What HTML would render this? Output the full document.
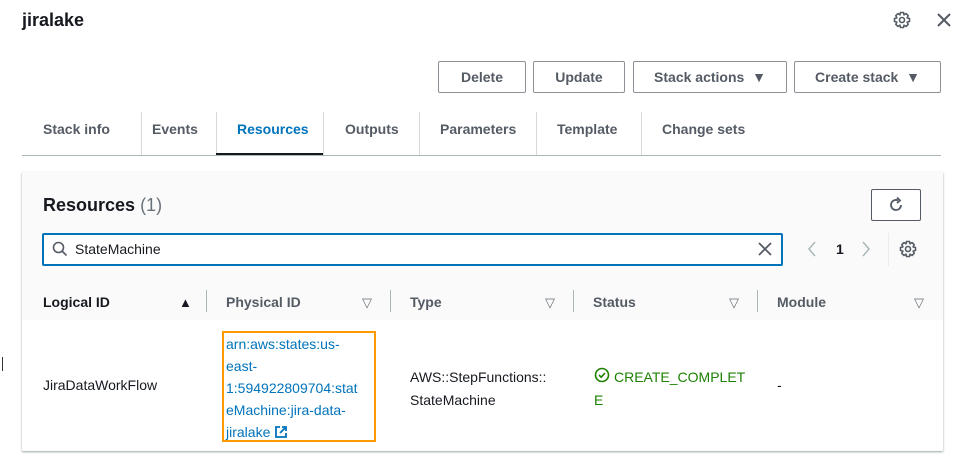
<!DOCTYPE html>
<html><head><style>
*{box-sizing:border-box;margin:0;padding:0}
body{width:977px;height:470px;background:#fff;font-family:"Liberation Sans",sans-serif;color:#16191f;position:relative;overflow:hidden;font-size:14px}
.a{position:absolute}
.btn{position:absolute;top:61px;height:32px;border:1px solid #8d9096;border-radius:2px;font-weight:bold;font-size:14px;color:#545b64;display:flex;align-items:center;justify-content:center;background:#fff}
.tab{position:absolute;top:121px;font-weight:bold;font-size:14px;color:#545b64}
.sep{position:absolute;top:112px;height:44px;width:1px;background:#d5dbdb}
.th{position:absolute;top:294px;font-weight:bold;font-size:14px;color:#545b64}
.tri{position:absolute;top:295px;font-size:13px;color:#687078}
.cs{position:absolute;top:290px;height:22px;width:1px;background:#aab7b8}
.link{color:#0073bb}
</style></head><body>
<div class="a" style="left:22px;top:10px;font-size:18px;font-weight:bold">jiralake</div>
<svg class="a" style="left:893px;top:11px" width="18" height="18" viewBox="0 0 18 18"><path d="M7.5 1.5H10.5L11 3.8L13.1 2.6L15.2 4.7L14.1 6.9L16.5 7.5V10.5L14.1 11.1L15.2 13.3L13.1 15.4L11 14.2L10.5 16.5H7.5L7 14.2L4.9 15.4L2.8 13.3L3.9 11.1L1.5 10.5V7.5L3.9 6.9L2.8 4.7L4.9 2.6L7 3.8Z" fill="none" stroke="#545b64" stroke-width="1.6" stroke-linejoin="round"/><circle cx="9" cy="9" r="2.5" fill="none" stroke="#545b64" stroke-width="1.6"/></svg>
<svg class="a" style="left:936px;top:12px" width="16" height="16" viewBox="0 0 16 16"><path d="M2 2L14 14M14 2L2 14" stroke="#545b64" stroke-width="2"/></svg>
<div class="btn" style="left:438px;width:88px">Delete</div>
<div class="btn" style="left:533px;width:92px">Update</div>
<div class="btn" style="left:633px;width:154px">Stack actions&nbsp;&nbsp;▼</div>
<div class="btn" style="left:794px;width:147px">Create stack&nbsp;&nbsp;▼</div>
<div class="tab" style="left:43px">Stack info</div>
<div class="sep" style="left:141px"></div>
<div class="tab" style="left:152px">Events</div>
<div class="sep" style="left:216px"></div>
<div class="tab" style="left:237px;color:#0073bb">Resources</div>
<div class="a" style="left:216px;top:153px;width:107px;height:3px;background:#16191f"></div>
<div class="sep" style="left:323px"></div>
<div class="tab" style="left:345px">Outputs</div>
<div class="sep" style="left:419px"></div>
<div class="tab" style="left:440px">Parameters</div>
<div class="sep" style="left:536px"></div>
<div class="tab" style="left:557px">Template</div>
<div class="sep" style="left:641px"></div>
<div class="tab" style="left:662px">Change sets</div>
<div class="a" style="left:22px;top:155px;width:919px;height:1px;background:#aab7b8"></div>
<div class="a" style="left:22px;top:172px;width:921px;height:279px;background:#fafafa;box-shadow:0 1px 2px rgba(0,28,36,.4)"></div>
<div class="a" style="left:22px;top:320px;width:921px;height:130px;background:#fff"></div>
<div class="a" style="left:43px;top:195px;font-size:18px;font-weight:bold">Resources <span style="font-weight:normal;color:#687078">(1)</span></div>
<div class="a" style="left:871px;top:189px;width:50px;height:32px;border:1px solid #545b64;border-radius:2px;background:#fff"></div>
<svg class="a" style="left:887px;top:196px" width="18" height="18" viewBox="0 0 18 18"><path d="M14 9A5 5 0 1 1 11 4.4" fill="none" stroke="#545b64" stroke-width="1.8"/><path d="M10 1.5L13 4.5L10 7" fill="none" stroke="#545b64" stroke-width="1.8"/></svg>
<div class="a" style="left:42px;top:233px;width:741px;height:33px;border:2px solid #0073bb;border-radius:2px;background:#fff"></div>
<svg class="a" style="left:52px;top:241px" width="16" height="16" viewBox="0 0 16 16"><circle cx="6.5" cy="6.5" r="5" fill="none" stroke="#545b64" stroke-width="1.6"/><path d="M10 10L14.5 14.5" stroke="#545b64" stroke-width="1.6"/></svg>
<div class="a" style="left:75px;top:241px">StateMachine</div>
<svg class="a" style="left:758px;top:242px" width="14" height="14" viewBox="0 0 14 14"><path d="M1 1L13 13M13 1L1 13" stroke="#545b64" stroke-width="1.8"/></svg>
<svg class="a" style="left:806px;top:240px" width="12" height="18" viewBox="0 0 12 18"><path d="M9 2L3 9L9 16" fill="none" stroke="#aab7b8" stroke-width="1.5"/></svg>
<div class="a" style="left:836px;top:241px;font-weight:bold">1</div>
<svg class="a" style="left:860px;top:240px" width="12" height="18" viewBox="0 0 12 18"><path d="M3 2L9 9L3 16" fill="none" stroke="#aab7b8" stroke-width="1.5"/></svg>
<div class="a" style="left:888px;top:233px;width:1px;height:33px;background:#eaeded"></div>
<svg class="a" style="left:899px;top:240px" width="18" height="18" viewBox="0 0 18 18"><path d="M7.5 1.5H10.5L11 3.8L13.1 2.6L15.2 4.7L14.1 6.9L16.5 7.5V10.5L14.1 11.1L15.2 13.3L13.1 15.4L11 14.2L10.5 16.5H7.5L7 14.2L4.9 15.4L2.8 13.3L3.9 11.1L1.5 10.5V7.5L3.9 6.9L2.8 4.7L4.9 2.6L7 3.8Z" fill="none" stroke="#545b64" stroke-width="1.6" stroke-linejoin="round"/><circle cx="9" cy="9" r="2.5" fill="none" stroke="#545b64" stroke-width="1.6"/></svg>
<div class="th" style="left:43px;color:#16191f">Logical ID</div><div class="tri" style="left:179px;color:#16191f">▲</div>
<div class="cs" style="left:206px"></div>
<div class="th" style="left:226px">Physical ID</div><div class="tri" style="left:362px">▽</div>
<div class="cs" style="left:390px"></div>
<div class="th" style="left:410px">Type</div><div class="tri" style="left:545px">▽</div>
<div class="cs" style="left:573px"></div>
<div class="th" style="left:593px">Status</div><div class="tri" style="left:729px">▽</div>
<div class="cs" style="left:757px"></div>
<div class="th" style="left:777px">Module</div><div class="tri" style="left:914px">▽</div>
<div class="a" style="left:2px;top:357px;width:1px;height:14px;background:#333"></div>
<div class="a" style="left:43px;top:377px">JiraDataWorkFlow</div>
<div class="a" style="left:222px;top:331px;width:154px;height:111px;border:2px solid #ff9900"></div>
<div class="a link" style="left:226px;top:333px;line-height:22px;width:148px">arn:aws:states:us-<br>east-<br>1:594922809704:stat<br>eMachine:jira-data-<br>jiralake <svg width="14" height="14" viewBox="0 0 14 14" style="vertical-align:-2px"><path d="M6 2H2V12H12V8M8 2H12V6M12 2L6 8" fill="none" stroke="#0073bb" stroke-width="1.8"/></svg></div>
<div class="a" style="left:410px;top:366px;line-height:23px">AWS::StepFunctions::<br>StateMachine</div>
<svg class="a" style="left:594px;top:367px" width="16" height="16" viewBox="0 0 16 16"><circle cx="8" cy="8" r="6.5" fill="none" stroke="#1d8102" stroke-width="1.6"/><path d="M5 8L7.2 10.2L11 6" fill="none" stroke="#1d8102" stroke-width="1.6"/></svg>
<div class="a" style="left:614px;top:366px;line-height:23px;color:#1d8102">CREATE_COMPLET</div>
<div class="a" style="left:594px;top:389px;line-height:23px;color:#1d8102">E</div>
<div class="a" style="left:777px;top:377px">-</div>
</body></html>
